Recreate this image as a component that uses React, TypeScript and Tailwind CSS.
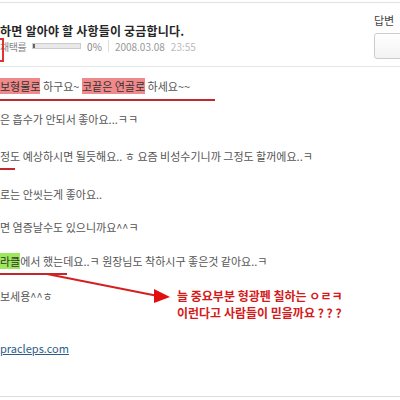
const font = { fontFamily: '"Noto Sans CJK KR", "Noto Sans", sans-serif' };

function Line({ top, children }: { top: number; children: React.ReactNode }) {
  return (
    <div className="absolute left-0 h-[18px] leading-[18px] whitespace-nowrap" style={{ top }}>
      {children}
    </div>
  );
}

export default function App() {
  return (
    <div
      className="relative w-[400px] h-[400px] overflow-hidden bg-white text-[11px] text-[#555]"
      style={font}
    >
      <div className="mt-[2px] border-t border-[#e2e2e2]" />

      {/* header */}
      <div className="flex justify-between h-[64px] border-b border-[#e6e6e6]">
        <div className="flex flex-col">
          <div className="mt-[20px] h-[16px] leading-[16px] text-[12px] font-bold text-[#262626] tracking-[0.2px] whitespace-nowrap">
            하면 알아야 할 사항들이 궁금합니다.
          </div>
          <div className="mt-[1px] flex items-center h-[12px] text-[10px] text-[#888] whitespace-nowrap">
            <span className="tracking-[-0.5px]">채택률</span>
            <div className="ml-[6px] w-[49px] h-[6px] border border-[#ccc] bg-[#e8e8e8] flex">
              <div className="w-[2px] h-full bg-[#666]" />
            </div>
            <span className="ml-[6px]">0%</span>
            <div className="ml-[6px] w-px h-[12px] bg-[#ddd]" />
            <span className="ml-[6px] text-[#999]">2008.03.08</span>
            <span className="ml-[6px] text-[#bbb]">23:55</span>
          </div>
        </div>
        <div className="flex flex-col w-[26px]">
          <div className="mt-[11px] h-[12px] leading-[12px] text-[11px] text-[#444] whitespace-nowrap">답변</div>
          <div className="mt-[7px] w-[40px] h-[26px] rounded-[3px] border border-[#ccc] bg-gradient-to-b from-white to-[#f3f3f3]" />
        </div>
      </div>

      {/* red box around 채택률 */}
      <div className="absolute left-[-40px] top-[38px] w-[44px] h-[24px] border-2 border-[#d33]" />

      {/* content */}
      <div className="relative">
        <Line top={10}>
          <span className="bg-[#f08a8a] text-[#333]">보형물로</span> 하구요~{" "}
          <span className="bg-[#f08a8a] text-[#333]">코끝은 연골로</span> 하세요~~
        </Line>
        <Line top={43}>은 흡수가 안되서 좋아요...ㅋㅋ</Line>
        <Line top={80}>정도 예상하시면 될듯해요.. ㅎ 요즘 비성수기니까 그정도 할꺼에요..ㅋ</Line>
        <Line top={118}>로는 안씻는게 좋아요..</Line>
        <Line top={151}>면 염증날수도 있으니까요^^ㅋ</Line>
        <Line top={185}>
          <span className="bg-[#9be85a] text-[#333]">라클</span>에서 했는데요..ㅋ 원장님도 착하시구 좋은것 같아요..ㅋ
        </Line>
        <Line top={220}>보세용^^ㅎ</Line>
        <Line top={272}>
          <span className="text-[#2a5d8a] underline">pracleps.com</span>
        </Line>
      </div>

      {/* annotations */}
      <div className="absolute left-0 top-[99px] w-[215px] h-[2px] bg-[#c0282d]" />
      <div className="absolute left-0 top-[168px] w-[15px] h-[2px] bg-[#c0282d]" />
      <div className="absolute left-0 top-[273px] w-[67px] h-[2px] bg-[#c0282d]" />
      <svg className="absolute left-0 top-0" width="400" height="400">
        <line x1="47" y1="274" x2="158" y2="296" stroke="#d42020" strokeWidth="2" />
        <polygon points="170,297 154,289 154,303" fill="#e01010" />
      </svg>
      <div className="absolute left-[177px] top-[287px] text-[12px] font-bold text-[#d41a1a] whitespace-nowrap">
        <div className="h-[17px] leading-[17px]">늘 중요부분 형광펜 칠하는 ㅇㄹㅋ</div>
        <div className="h-[17px] leading-[17px]">이런다고 사람들이 믿을까요 ? ? ?</div>
      </div>

      <div className="absolute left-0 top-[396px] w-full border-t border-[#ddd]" />
    </div>
  );
}
